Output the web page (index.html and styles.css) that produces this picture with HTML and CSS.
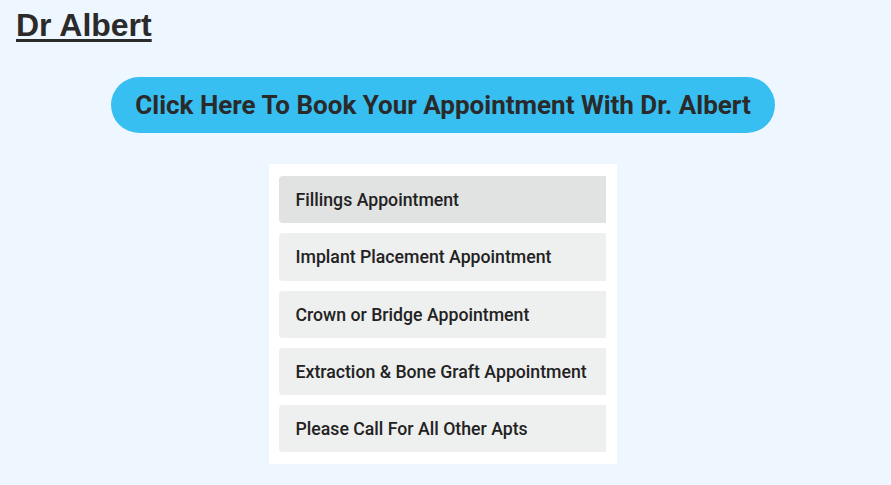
FILE: index.html
```html
<!DOCTYPE html>
<html>
<head>
<meta charset="utf-8">
<link rel="stylesheet" href="styles.css">
</head>
<body>
<h1 class="title"><a href="#">Dr Albert</a></h1>
<div class="cta-wrap"><a class="cta" href="#">Click Here To Book Your Appointment With Dr. Albert</a></div>
<div class="panel-wrap">
  <ul class="panel">
    <li class="item active">Fillings Appointment</li>
    <li class="item">Implant Placement Appointment</li>
    <li class="item">Crown or Bridge Appointment</li>
    <li class="item">Extraction &amp; Bone Graft Appointment</li>
    <li class="item">Please Call For All Other Apts</li>
  </ul>
</div>
</body>
</html>
```
FILE: styles.css
```css
html, body { margin: 0; padding: 0; }
body {
  background: #eef6ff;
  padding: 0 22px 0 16px;
  height: 485px;
  box-sizing: border-box;
  overflow: hidden;
}
.title {
  margin: 0;
  padding-top: 7px;
  font-family: "Liberation Sans", Arial, sans-serif;
  font-size: 32px;
  font-weight: bold;
  line-height: 37px;
}
.title a { color: #2b2b2b; text-decoration: underline; text-underline-offset: 3px; text-decoration-thickness: 3px; }
.cta-wrap { display: flex; justify-content: center; margin-top: 33px; padding-left: 1px; }
.cta {
  display: block;
  width: 664px;
  height: 56px;
  box-sizing: border-box;
  border-radius: 28px;
  background: #38bff2;
  color: #2a2a2a;
  text-decoration: none;
  font-family: Roboto, sans-serif;
  font-weight: 700;
  font-size: 26px;
  line-height: 56px;
  text-align: center;
}
.panel-wrap { display: flex; justify-content: center; margin-top: 31px; }
.panel {
  list-style: none;
  margin: 0;
  width: 348px;
  box-sizing: border-box;
  padding: 12px 11px 12px 10px;
  background: #fff;
  display: flex;
  flex-direction: column;
  gap: 10px;
}
.item {
  height: 47.3px;
  box-sizing: border-box;
  padding-top: 1px;
  border-radius: 4px 0 0 4px;
  background: #eeefef;
  padding-left: 17px;
  font-family: Roboto, sans-serif;
  font-weight: 500;
  font-size: 17.7px;
  line-height: 46px;
  color: #222;
}
.item.active { background: #e1e2e2; }
```
